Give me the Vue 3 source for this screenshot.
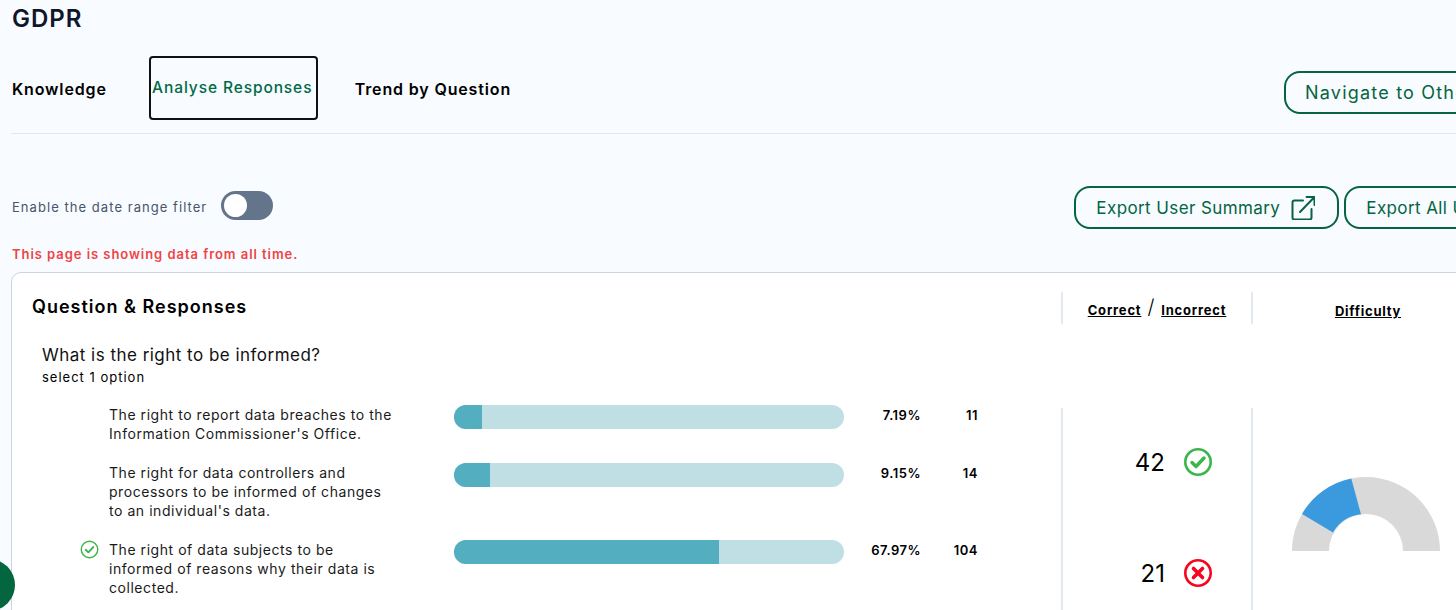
<template>
  <div class="page">
    <h1 class="title">GDPR</h1>

    <div class="tabs">
      <span class="tab">Knowledge</span>
      <span class="tab active">Analyse Responses</span>
      <span class="tab">Trend by Question</span>
      <button class="btn nav-btn">Navigate to Other Assessments</button>
    </div>

    <div class="filter-row">
      <span class="filter-label">Enable the date range filter</span>
      <span class="toggle"><span class="knob"></span></span>
      <div class="exports">
        <button class="btn">
          Export User Summary
          <svg class="ext" viewBox="0 0 24 24" fill="none" stroke="currentColor" stroke-width="2" stroke-linejoin="round" stroke-linecap="round">
            <path d="M12 4.5H3.5a2 2 0 0 0-2 2v15a2 2 0 0 0 2 2h15a2 2 0 0 0 2-2V13" />
            <path d="M9 16L23 1.500M15.500 1h8v8" />
          </svg>
        </button>
        <button class="btn">Export All User Responses</button>
      </div>
    </div>

    <p class="notice">This page is showing data from all time.</p>

    <div class="card">
      <div class="card-head">
        <h2 class="card-title">Question &amp; Responses</h2>
        <div class="col col-score head-cell">
          <u>Correct</u><span class="slash">/</span><u>Incorrect</u>
        </div>
        <div class="col col-diff head-cell"><u>Difficulty</u></div>
      </div>

      <div class="card-body">
        <div class="question">
          <div class="q-text">What is the right to be informed?</div>
          <div class="q-hint">select 1 option</div>

          <div v-for="o in options" :key="o.text" class="option">
            <span class="tick">
              <svg v-if="o.correct" viewBox="0 0 20 20" fill="none" stroke="#3cb54a">
                <circle cx="10" cy="10" r="8.700" stroke-width="1.500" />
                <path d="M6 10.300l2.800 2.700L14 7.400" stroke-width="2" stroke-linecap="round" stroke-linejoin="round" />
              </svg>
            </span>
            <span class="o-text">{{ o.text }}</span>
            <span class="bar"><span class="fill" :style="{ width: o.pct + '%' }"></span></span>
            <span class="pct">{{ o.pct }}%</span>
            <span class="count">{{ o.count }}</span>
          </div>
        </div>

        <div class="col col-score scores">
          <div class="score">
            <span>42</span>
            <svg viewBox="0 0 28 28" fill="none" stroke="#3cb54a">
              <circle cx="14" cy="14" r="12.700" stroke-width="2.600" />
              <path d="M8 14.500l4 4 8-8.500" stroke-width="3.400" stroke-linecap="round" stroke-linejoin="round" />
            </svg>
          </div>
          <div class="score">
            <span>21</span>
            <svg viewBox="0 0 28 28" fill="none" stroke="#f5051e">
              <circle cx="14" cy="14" r="12.700" stroke-width="2.600" />
              <path d="M9.500 9.500l9 9M18.500 9.500l-9 9" stroke-width="3.600" stroke-linecap="round" />
            </svg>
          </div>
        </div>

        <div class="col col-diff gauge-wrap">
          <svg class="gauge" viewBox="0 0 148 74">
            <path d="M0 74A74 74 0 0 1 148 74H111A37 37 0 0 0 37 74Z" fill="#d9d9d9" />
            <path d="M10 37A74 74 0 0 1 59.300 1.500L69 37.300A37 37 0 0 0 41 55.500Z" fill="#3b9ade" />
          </svg>
        </div>
      </div>
    </div>

    <div class="fab"></div>
  </div>
</template>

<script setup>
const options = [
  { text: "The right to report data breaches to the Information Commissioner's Office.", pct: 7.19, count: 11 },
  { text: "The right for data controllers and processors to be informed of changes to an individual's data.", pct: 9.15, count: 14 },
  { text: 'The right of data subjects to be informed of reasons why their data is collected.', pct: 67.97, count: 104, correct: true },
]
</script>

<style>
html, body { overflow: hidden; height: 100%; background: #f8fbff; }
</style>

<style scoped>
* { box-sizing: border-box; }
.page { width: 1800px; height: 610px; overflow: hidden; padding-left: 11px; font-family: Inter, "Liberation Sans", sans-serif; color: #000; background: #f8fbff; }
.title { margin: 0; padding: 6px 0 0 1px; height: 56px; font-size: 24px; line-height: 26px; font-weight: 600; color: #0f172a; letter-spacing: 1px; }
.tabs { display: flex; align-items: center; height: 78px; padding-bottom: 14px; border-bottom: 1px solid #e2e8f0; }
.tab { padding: 2px 0 0 1px; font-size: 16px; font-weight: 600; letter-spacing: .85px; white-space: nowrap; margin-right: 42px; }
.tab.active { display: flex; align-items: center; justify-content: center; width: 169px; height: 64px; margin-right: 36px; padding: 0 2px 1px 0; border: 2px solid #111; border-radius: 4px; color: #006a46; font-weight: 500; font-size: 15.500px; letter-spacing: .9px; }
.btn { display: flex; align-items: center; height: 43px; padding: 0 20px; background: none; border: 2.500px solid #05653f; border-radius: 16px; color: #05653f; font-family: inherit; font-size: 17px; letter-spacing: .4px; white-space: nowrap; }
.nav-btn { margin-left: 731px; margin-top: 10px; padding-left: 19px; font-size: 18px; letter-spacing: 1.2px; }
.filter-row { display: flex; align-items: center; margin-top: 52px; height: 43px; }
.filter-label { padding: 0 0 1px 1px; font-size: 13px; letter-spacing: 1.05px; color: #475569; white-space: nowrap; }
.toggle { display: block; width: 52px; height: 29px; margin: 0 0 5px 14px; padding: 3px; border-radius: 15px; background: #64748b; }
.knob { display: block; width: 23px; height: 23px; border-radius: 50%; background: #fff; }
.exports { display: flex; gap: 5px; margin-left: 801px; }
.ext { width: 24px; height: 24px; margin: 0 2px 0 11px; }
.notice { margin: 16px 0 9px 1px; height: 18px; font-size: 13px; line-height: 18px; font-weight: 600; letter-spacing: .95px; color: #ef4444; }
.card { width: 1700px; height: 400px; background: #fff; border: 1px solid #cbd5e1; border-radius: 10px; padding-top: 19px; }
.card-head { display: flex; height: 32px; }
.card-title { width: 1049px; margin: 0; padding-left: 20px; font-size: 18px; line-height: 30px; font-weight: 600; letter-spacing: 1px; }
.col { flex: none; border-left: 2px solid #e2e8f0; }
.col-score { width: 190px; }
.col-diff { width: 232px; }
.head-cell { display: flex; align-items: center; justify-content: center; padding-top: 4px; font-size: 13px; font-weight: 700; letter-spacing: .8px; }
.col-diff.head-cell { padding-top: 6px; letter-spacing: .75px; }
.slash { margin: -6px 6px 0; font-size: 20px; font-weight: 300; }
.card-body { display: flex; }
.question { width: 1049px; padding: 21px 0 0 30px; }
.q-text { font-size: 17px; line-height: 20px; letter-spacing: .48px; color: #111; }
.q-hint { margin-top: 3px; font-size: 13px; line-height: 18px; letter-spacing: 1px; }
.option { display: flex; margin-top: 20px; font-size: 14px; line-height: 19px; }
.q-hint + .option { margin-top: 19px; }
.tick { width: 29px; margin-left: 38px; flex: none; }
.tick svg { display: block; width: 19px; height: 19px; }
.o-text { width: 345px; padding-right: 58px; flex: none; letter-spacing: .55px; color: #1a1a1a; }
.bar { display: block; width: 390px; height: 24px; flex: none; overflow: hidden; border-radius: 12px; background: #bfdfe5; }
.fill { display: block; height: 100%; background: #53aebf; }
.pct { width: 77px; flex: none; text-align: right; font-size: 13px; font-weight: 600; line-height: 20px; letter-spacing: .5px; }
.count { width: 57px; flex: none; text-align: right; font-size: 13px; font-weight: 600; line-height: 20px; letter-spacing: .5px; }
.scores { height: 300px; margin-top: 84px; padding-top: 40px; }
.score { display: flex; align-items: center; justify-content: flex-end; width: 149px; height: 28px; margin-bottom: 83px; font-size: 24px; }
.score span { margin-right: 19px; }
.score svg { width: 28px; height: 28px; flex: none; }
.gauge-wrap { height: 300px; margin-top: 84px; padding: 69px 0 0 39px; }
.gauge { display: block; width: 148px; height: 74px; }
.fab { position: fixed; left: -37px; top: 559px; width: 52px; height: 52px; border-radius: 50%; background: #04663f; }
</style>
